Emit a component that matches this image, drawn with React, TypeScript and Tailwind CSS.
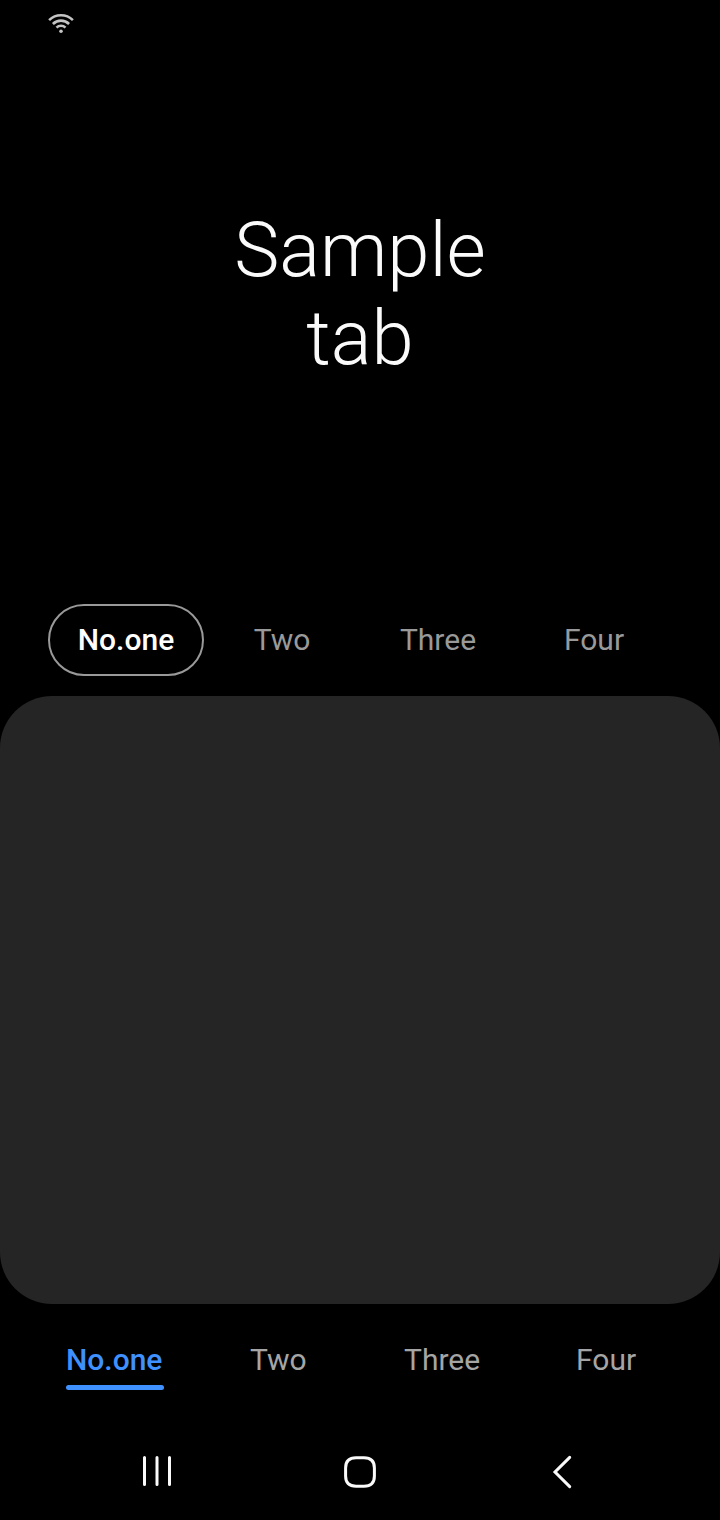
const top = [
  { label: 'No.one', cls: 'border-2 border-[#999] text-white font-medium' },
  { label: 'Two', cls: 'text-[#999]' },
  { label: 'Three', cls: 'text-[#999]' },
  { label: 'Four', cls: 'text-[#999]' },
];

export default function App() {
  return (
    <div className="flex h-[1520px] w-[720px] flex-col overflow-hidden bg-black font-['Roboto',sans-serif]">
      <header className="h-[48px] shrink-0 pl-[47px] pt-[12px]">
        <svg width="28" height="22" viewBox="0 0 28 22" fill="none" stroke="#c4c4c4" strokeWidth="2.6">
          <path d="M2.100 8.100C8.800 1.700 19.200 1.700 25.900 8.100" />
          <path d="M5.900 12C10.500 7.500 17.500 7.500 22.100 12" />
          <path d="M9.500 15.600C12 13.200 16 13.200 18.500 15.600" />
          <circle cx="14" cy="19.300" r="1.800" fill="#c4c4c4" stroke="none" />
        </svg>
      </header>
      <h1 className="h-[556px] shrink-0 pt-[158px] text-center text-[76px] font-light leading-[88px] text-[#fafafa]">
        Sample
        <br />
        tab
      </h1>
      <nav className="flex h-[92px] shrink-0 pl-12 text-[30px] leading-[36px]">
        {top.map((t) => (
          <button key={t.label} className={`flex h-[72px] w-[156px] items-center justify-center rounded-full ${t.cls}`}>
            {t.label}
          </button>
        ))}
      </nav>
      <main className="h-[608px] shrink-0 rounded-[52px] bg-[#252525]" />
      <nav className="flex h-[120px] shrink-0 items-start pl-[66px] pt-[38px] text-[30px] leading-[36px] text-[#a5a5a5]">
        <button className="flex w-[184px] flex-col items-start font-medium text-[#3e91ff]">
          No.one
          <span className="mt-[7px] h-[5px] w-[98px] rounded-full bg-[#3e91ff]" />
        </button>
        <button className="w-[154px] text-left">Two</button>
        <button className="w-[172px] text-left">Three</button>
        <button className="text-left">Four</button>
      </nav>
      <footer className="flex h-[96px] shrink-0 pl-[137px] pt-[28px]">
        <svg width="203" height="40" fill="none" stroke="#fafafa" strokeWidth="3" strokeLinecap="round">
          <path d="M7.500 5.500v27M20 5.500v27M32.500 5.500v27" />
        </svg>
        <svg width="209" height="40" fill="none" stroke="#fafafa" strokeWidth="3">
          <path d="M16 5.800H24C31 5.800 34.400 9.200 34.400 16V24C34.400 30.800 31 34.200 24 34.200H16C9 34.200 5.600 30.800 5.600 24V16C5.600 9.200 9 5.800 16 5.800Z" />
        </svg>
        <svg width="40" height="40" fill="none" stroke="#fafafa" strokeWidth="3" strokeLinecap="round">
          <path d="M20.700 5.400L6 20L20.700 34.600" />
        </svg>
      </footer>
    </div>
  );
}
